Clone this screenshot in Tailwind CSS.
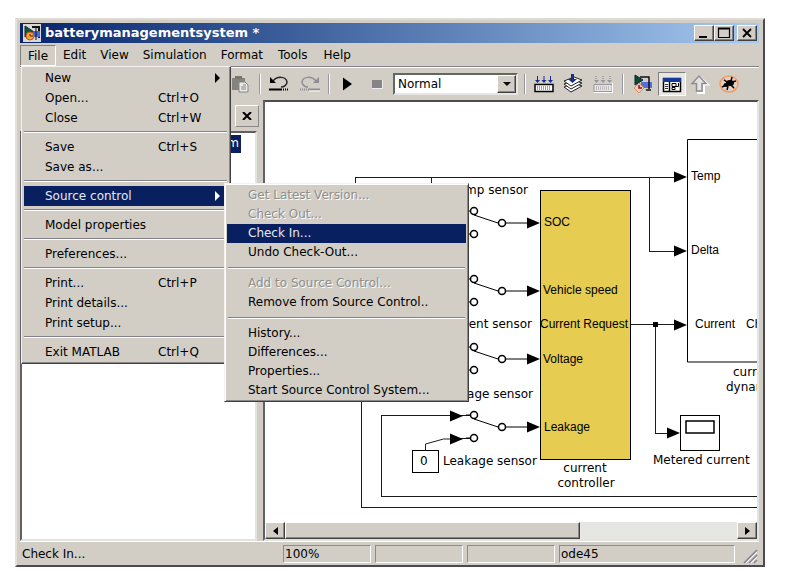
<!DOCTYPE html>
<html lang="en">
<head>
    <meta charset="UTF-8">
    <meta name="viewport" content="width=device-width, initial-scale=1.0">
    <title>batterymanagementsystem *</title>
    <script src="https://cdn.jsdelivr.net/npm/@tailwindcss/browser@4"></script>
</head>
<body class="h-screen bg-white pl-[15px] pr-[26px] py-[18px] font-['DejaVu_Sans',sans-serif] text-[12px] leading-[20px] text-black">

<!-- Window -->
<div class="h-full flex flex-col bg-[#d2cec6] border-2 border-t-[#dedbd5] border-l-[#e4e1dc] border-r-[#4a4a50] border-b-[#4a4a50] pt-[3px] pl-[3px] pr-1">

    <!-- Title bar -->
    <header class="flex items-center h-5 shrink-0 pl-0.5 pr-0.5 bg-linear-to-r from-[#08246b] to-[#a6caf0]">
        <svg class="w-5 h-5" viewBox="0 0 20 20">
            <rect x="1" y="1" width="18" height="18" fill="#d8d8d8"/>
            <path d="M3 3v11l9-5z" fill="#0c5a3c" stroke="#222"/>
            <path d="M10 4h7v11" fill="none" stroke="#111" stroke-width="2"/>
            <rect x="11" y="8" width="7" height="6" fill="#4468d8"/>
            <path d="M14 3v14" stroke="#111"/>
            <circle cx="8" cy="13" r="4" fill="#f0a040" stroke="#c05818"/>
            <path d="M8 11v2h3" fill="none" stroke="#702800"/>
        </svg>
        <h1 class="flex-1 pl-[3px] text-[13px] font-bold text-white">batterymanagementsystem *</h1>
        <button aria-label="Minimize" class="w-5 h-4 bg-[#d2cec6] border border-t-white border-l-white border-r-[#404040] border-b-[#404040] shadow-[inset_-1px_-1px_#808080]">
            <svg class="w-[18px] h-3.5" viewBox="0 0 18 14"><path d="M4 10h8v2H4z"/></svg>
        </button>
        <button aria-label="Maximize" class="w-5 h-4 bg-[#d2cec6] border border-t-white border-l-white border-r-[#404040] border-b-[#404040] shadow-[inset_-1px_-1px_#808080]">
            <svg class="w-[18px] h-3.5" viewBox="0 0 18 14"><path d="M3.500 2h11M3.500 3h11M3.500 1.500v10h11v-10" fill="none" stroke="#000" stroke-width="1.200"/></svg>
        </button>
        <button aria-label="Close" class="ml-[3px] w-5 h-4 bg-[#d2cec6] border border-t-white border-l-white border-r-[#404040] border-b-[#404040] shadow-[inset_-1px_-1px_#808080]">
            <svg class="w-[18px] h-3.5" viewBox="0 0 18 14"><path d="M5 3l8 8M13 3l-8 8" stroke="#000" stroke-width="1.800"/></svg>
        </button>
    </header>

    <!-- Menu bar -->
    <nav class="flex h-6 shrink-0 pt-0.5 border-b border-[#85818a]">
        <div class="relative">
            <button class="h-[21px] w-9 border border-t-[#808080] border-l-[#808080] border-r-white border-b-white">File</button>

            <!-- File menu -->
            <div class="absolute z-10 left-px top-[21px] w-[210px] pt-px pb-px px-0.5 bg-[#d2cec6] border border-t-[#f4f2ef] border-l-[#f4f2ef] border-r-[#404040] border-b-[#404040] shadow-[inset_-1px_-1px_#8c8888]">
                <button class="flex w-full h-5 items-center pl-[21px] pr-1.5"><span class="flex-1 text-left">New</span><svg class="w-2 h-2.5" viewBox="0 0 8 10"><path d="M1 0l5 5-5 5z"/></svg></button>
                <button class="flex w-full h-5 items-center pl-[21px]"><span class="w-[113px] text-left">Open...</span><span>Ctrl+O</span></button>
                <button class="flex w-full h-5 items-center pl-[21px]"><span class="w-[113px] text-left">Close</span><span>Ctrl+W</span></button>
                <hr class="h-0.5 mt-[3px] mb-1 mr-px border-t border-b border-t-[#85818a] border-b-white">
                <button class="flex w-full h-5 items-center pl-[21px]"><span class="w-[113px] text-left">Save</span><span>Ctrl+S</span></button>
                <button class="flex w-full h-5 items-center pl-[21px]">Save as...</button>
                <hr class="h-0.5 mt-[3px] mb-1 mr-px border-t border-b border-t-[#85818a] border-b-white">
                <div class="relative">
                    <button class="flex w-full h-5 items-center pl-[21px] pr-1.5 bg-[#08205f] text-[#e8e8f0]"><span class="flex-1 text-left">Source control</span><svg class="w-2 h-2.5 fill-white" viewBox="0 0 8 10"><path d="M1 0l5 5-5 5z"/></svg></button>

                    <!-- Source control submenu -->
                    <div class="absolute z-20 left-[200px] -top-[3px] w-[245px] pt-0.5 pb-px px-0.5 bg-[#d2cec6] border border-t-[#f4f2ef] border-l-[#f4f2ef] border-r-[#404040] border-b-[#404040] shadow-[inset_1px_1px_#fff,inset_-1px_-1px_#8c8888]">
                        <button disabled class="block w-full h-[19px] leading-[19px] pl-[21px] text-left text-[#918d8b] text-shadow-[1px_1px_#fff]">Get Latest Version...</button>
                        <button disabled class="block w-full h-[19px] leading-[19px] pl-[21px] text-left text-[#918d8b] text-shadow-[1px_1px_#fff]">Check Out...</button>
                        <button class="block w-full h-[19px] leading-[19px] pl-[21px] text-left bg-[#08205f] text-[#e8e8f0]">Check In...</button>
                        <button class="block w-full h-[19px] leading-[19px] pl-[21px] text-left">Undo Check-Out...</button>
                        <hr class="h-0.5 my-[5px] mx-px border-t border-b border-t-[#85818a] border-b-white">
                        <button disabled class="block w-full h-[19px] leading-[19px] pl-[21px] text-left text-[#918d8b] text-shadow-[1px_1px_#fff]">Add to Source Control...</button>
                        <button class="block w-full h-[19px] leading-[19px] pl-[21px] text-left">Remove from Source Control..</button>
                        <hr class="h-0.5 my-[5px] mx-px border-t border-b border-t-[#85818a] border-b-white">
                        <button class="block w-full h-[19px] leading-[19px] pl-[21px] text-left">History...</button>
                        <button class="block w-full h-[19px] leading-[19px] pl-[21px] text-left">Differences...</button>
                        <button class="block w-full h-[19px] leading-[19px] pl-[21px] text-left">Properties...</button>
                        <button class="block w-full h-[19px] leading-[19px] pl-[21px] text-left">Start Source Control System...</button>
                    </div>
                </div>
                <hr class="h-0.5 mt-[3px] mb-1 mr-px border-t border-b border-t-[#85818a] border-b-white">
                <button class="flex w-full h-5 items-center pl-[21px]">Model properties</button>
                <hr class="h-0.5 mt-[3px] mb-1 mr-px border-t border-b border-t-[#85818a] border-b-white">
                <button class="flex w-full h-5 items-center pl-[21px]">Preferences...</button>
                <hr class="h-0.5 mt-[3px] mb-1 mr-px border-t border-b border-t-[#85818a] border-b-white">
                <button class="flex w-full h-5 items-center pl-[21px]"><span class="w-[113px] text-left">Print...</span><span>Ctrl+P</span></button>
                <button class="flex w-full h-5 items-center pl-[21px]">Print details...</button>
                <button class="flex w-full h-5 items-center pl-[21px]">Print setup...</button>
                <hr class="h-0.5 mt-[3px] mb-1 mr-px border-t border-b border-t-[#85818a] border-b-white">
                <button class="flex w-full h-5 items-center pl-[21px]"><span class="w-[113px] text-left">Exit MATLAB</span><span>Ctrl+Q</span></button>
            </div>
        </div>
        <button class="h-5 px-[7px]">Edit</button>
        <button class="h-5 px-[7px]">View</button>
        <button class="h-5 px-[7px]">Simulation</button>
        <button class="h-5 px-[7px]">Format</button>
        <button class="h-5 px-2">Tools</button>
        <button class="h-5 px-2">Help</button>
    </nav>

    <!-- Toolbar -->
    <div class="flex items-center h-[33px] shrink-0 border-t border-white pl-[208px]">
        <button aria-label="Paste" class="w-6 h-6 flex items-center justify-center">
            <svg class="w-5 h-5" viewBox="0 0 20 20">
                <path d="M2 4h13v12H2z" fill="#85857f"/><path d="M5 2h7v3H5z" fill="#77776f"/>
                <path d="M9 8h6l3 3v7H9z" fill="#eceae6" stroke="#85858c"/><path d="M11 15h5M11 13h5M13 11h3" stroke="#85858c"/>
            </svg>
        </button>
        <span class="ml-[7px] w-0.5 h-5 bg-[#9694a0] border-r border-white"></span>
        <button aria-label="Undo" class="ml-[6px] w-6 h-6 flex items-center justify-center">
            <svg class="w-5 h-5" viewBox="0 0 20 20">
                <path d="M1 3v6h6z"/><path d="M4 7C8 2 17 2 18 8c0 3-3 5-6 5" fill="none" stroke="#222" stroke-width="1.500"/>
                <path d="M0 15.500h12" stroke="#000" stroke-width="2"/><path d="M12 15.500h8" stroke="#000" stroke-width="2" stroke-dasharray="1 1"/>
            </svg>
        </button>
        <button aria-label="Redo" class="ml-[7px] w-6 h-6 flex items-center justify-center">
            <svg class="w-5 h-5" viewBox="0 0 20 20">
                <path d="M19 3v6h-6z" fill="#8e8c94"/><path d="M16 7C12 2 3 2 2 8c0 3 3 5 6 5" fill="none" stroke="#8e8c94" stroke-width="1.500"/>
                <path d="M8 15.500h12" stroke="#8e8c94" stroke-width="2"/><path d="M0 15.500h8" stroke="#8e8c94" stroke-width="2" stroke-dasharray="1 1"/><path d="M9 17h11" stroke="#fff"/>
            </svg>
        </button>
        <span class="ml-[6px] w-0.5 h-5 bg-[#9694a0] border-r border-white"></span>
        <button aria-label="Start simulation" class="ml-[5px] w-6 h-6 flex items-center justify-center">
            <svg class="w-5 h-5" viewBox="0 0 20 20"><path d="M6 3.500l9 6.500-9 6.500z"/></svg>
        </button>
        <button aria-label="Stop simulation" class="ml-[6px] w-6 h-6 flex items-center justify-center">
            <svg class="w-5 h-5" viewBox="0 0 20 20"><path d="M5 6h10v8H5z" fill="#858585"/><path d="M5 14.500h10.500V6" fill="none" stroke="#eee"/></svg>
        </button>
        <div class="ml-[4px] relative w-[125px] h-[22px]">
            <select aria-label="Simulation mode" class="appearance-none w-full h-full pl-[3px] bg-white border-2 border-t-[#606860] border-l-[#606860] border-r-[#e8e6e2] border-b-[#e8e6e2] leading-[18px]">
                <option>Normal</option>
                <option>Accelerator</option>
                <option>External</option>
            </select>
            <span class="pointer-events-none absolute right-0.5 top-0.5 w-[19px] h-[18px] flex items-center justify-center bg-[#d2cec6] border border-t-white border-l-white border-r-[#404040] border-b-[#404040] shadow-[inset_-1px_-1px_#8c8888]">
                <svg class="w-2 h-1" viewBox="0 0 8 4"><path d="M0 0h8L4 4z"/></svg>
            </span>
        </div>
        <span class="ml-[6px] w-0.5 h-5 bg-[#9694a0] border-r border-white"></span>
        <button aria-label="Incremental build" class="ml-[6px] w-6 h-6 flex items-center justify-center">
            <svg class="w-5 h-5" viewBox="0 0 20 20">
                <path d="M1 10.500h18v7H1z" fill="#fff" stroke="#000" stroke-width="1.500"/>
                <path d="M3 13h14M3 15h14" stroke="#444" stroke-dasharray="1 1"/>
                <path d="M3.500 2v5M10 2v5M16.500 2v5" stroke="#182c90"/>
                <path d="M1 6h5L3.500 9zM7.500 6h5L10 9zM14 6h5l-2.500 3z" fill="#182c90"/>
            </svg>
        </button>
        <button aria-label="Build all" class="ml-[5px] w-6 h-6 flex items-center justify-center">
            <svg class="w-5 h-5" viewBox="0 0 20 20">
                <path d="M1 13l10-4 8 3-11 6z" fill="#fff" stroke="#222"/>
                <path d="M1 10l10-4 8 3-11 6z" fill="#fff" stroke="#222"/>
                <path d="M1 7l10-4 8 3-11 6z" fill="#fff" stroke="#222"/>
                <path d="M8 0h3v5h3l-4.500 4L5 5h3z" fill="#182c90"/>
            </svg>
        </button>
        <button aria-label="Rebuild" class="ml-[6px] w-6 h-6 flex items-center justify-center">
            <svg class="w-5 h-5" viewBox="0 0 20 20">
                <path d="M1 10.500h18v7H1z" fill="#e6e4e0" stroke="#98969c"/>
                <path d="M3 13h14M3 15h14" stroke="#98969c" stroke-dasharray="1 1"/>
                <path d="M3 2v5M10 2v5M17 2v5" stroke="#a8a6aa" stroke-dasharray="1 1" stroke-width="2"/>
                <path d="M1 6h5L3.500 9zM7.500 6h5L10 9zM14 6h5l-2.500 3z" fill="#98969c"/>
                <path d="M1 18.500h18.500V9" fill="none" stroke="#fff"/>
            </svg>
        </button>
        <span class="ml-[7px] w-0.5 h-5 bg-[#9694a0] border-r border-white"></span>
        <button aria-label="Library browser" class="ml-[7px] w-6 h-6 flex items-center justify-center">
            <svg class="w-5 h-5" viewBox="0 0 20 20">
                <path d="M2 1v10l8-5z" fill="#0c4a34" stroke="#123"/>
                <rect x="8" y="8" width="11" height="6" fill="#5470dc"/>
                <path d="M7 3h9v12M13 16h5" fill="none" stroke="#111" stroke-width="1.500"/>
                <path d="M6 9l5 5-5 5-5-5z" fill="#f8c8b0" stroke="#e09060"/><path d="M6 11v3h3" fill="none" stroke="#702030" stroke-width="1.500"/>
            </svg>
        </button>
        <button aria-label="Model explorer" class="ml-[3px] w-7 h-6 flex items-center justify-center bg-[#e9e7e3] border border-t-[#808080] border-l-[#808080] border-r-white border-b-white">
            <svg class="w-5 h-5" viewBox="0 0 20 20">
                <path d="M1.500 4.500h17v13h-17z" fill="#fff" stroke="#000" stroke-width="1.500"/>
                <path d="M1 4h18v4H1z" fill="#14389c"/><path d="M7.500 8v9" stroke="#000" stroke-width="1.500"/>
                <path d="M3 10.500h3M3 12.500h3M3 14.500h3" stroke="#333"/>
                <path d="M10 9.500h4v3h-4zM10 15.500h3v-2h-3zM14 12.500h2.500V9" fill="none" stroke="#000"/>
            </svg>
        </button>
        <button aria-label="Go to parent system" class="ml-0.5 w-6 h-6 flex items-center justify-center">
            <svg class="w-5 h-5" viewBox="0 0 20 20">
                <path d="M10 3l8 7.500h-4V19H7" fill="none" stroke="#fff" stroke-width="2"/>
                <path d="M9 2l7 7.500h-4V17H6.500V9.500H2z" fill="#e4e2de" stroke="#8e8c94" stroke-width="1.500"/>
            </svg>
        </button>
        <button aria-label="Debug" class="ml-[5px] w-6 h-6 flex items-center justify-center">
            <svg class="w-5 h-5" viewBox="0 0 20 20">
                <ellipse cx="10" cy="10" rx="9" ry="8" fill="#e0d2ca" stroke="#ec9c68" stroke-width="1.500"/>
                <path d="M4 4l13 12" stroke="#ec9c68" stroke-width="1.500"/>
                <ellipse cx="11" cy="9" rx="4" ry="3"/><ellipse cx="7" cy="11" rx="2.500" ry="2"/>
                <path d="M8 8L5 6M7 11l-4 2M9 12l-1 4M12 11l3 3M13 8l4-1M12 7l1-4" stroke="#000" stroke-width="1.500"/>
            </svg>
        </button>
    </div>

    <!-- Browser panel and model canvas -->
    <main class="flex flex-1 min-h-0">
        <aside class="flex flex-col w-[237px] shrink-0">
            <div class="flex justify-end items-center h-[31px] shrink-0 -mr-0.5">
                <button aria-label="Close browser" class="w-6 h-[22px] flex items-center justify-center border border-t-white border-l-white border-r-[#8c8888] border-b-[#8c8888]">
                    <svg class="w-2.5 h-2" viewBox="0 0 10 8"><path d="M1 0l8 8M9 0L1 8" stroke="#000" stroke-width="2"/></svg>
                </button>
            </div>
            <div class="flex-1 bg-white border-2 border-t-[#606060] border-l-[#606068] border-r-[#e2e4e0] border-b-[#e2e4e0] pt-0.5 pr-3.5">
                <p class="ml-auto w-fit px-0.5 h-[18px] leading-[16px] bg-[#08205f] text-white">batterymanagementsystem</p>
            </div>
        </aside>

        <section class="ml-[6px] flex flex-col flex-1 min-w-0 border-2 border-t-[#4c504c] border-l-[#606068] border-r-[#dfe6e4] border-b-[#e2e4e0]">
            <svg class="block flex-1 min-h-0 w-full bg-white text-[12px]" role="img" aria-label="Battery model">
                <defs>
                    <path id="arrow" d="M-13-5.500L0 0l-13 5.500z"/>
                    <g id="switch">
                        <path d="M-8 0h4M-8 23h4M0 4l24 8M32 12h30" fill="none" stroke="#000"/>
                        <circle r="3.500" fill="#fff" stroke="#000" stroke-width="1.500"/>
                        <circle cy="23" r="3.500" fill="#fff" stroke="#000" stroke-width="1.500"/>
                        <circle cx="28" cy="12" r="3.500" fill="#fff" stroke="#000" stroke-width="1.500"/>
                        <use href="#arrow" x="66" y="12"/>
                    </g>
                </defs>
                <g transform="translate(-265 -102)">
                    <!-- signal lines -->
                    <g fill="none" stroke="#1c1c1c" shape-rendering="crispEdges">
                        <path d="M355.500 200v-22.500h320M431.500 178v30M649.500 178v73h28"/>
                        <path d="M361.500 380v127.500h400M470 415.500h-89v80.500h381M460 438.500h10"/>
                        <path d="M630 324.500h46M655.500 324v109h14"/>
                    </g>
                    <path d="M425.500 450v-6l18-5h18" fill="none" stroke="#1c1c1c"/>
                    <rect x="653" y="322" width="5" height="5"/>

                    <!-- current dynamics block -->
                    <path d="M800 139.500H687.500V362H800" fill="#fff" stroke="#000"/>
                    <use href="#arrow" x="687" y="177"/>
                    <use href="#arrow" x="687" y="251"/>
                    <use href="#arrow" x="687" y="325"/>

                    <!-- switches -->
                    <use href="#switch" x="474" y="211"/>
                    <use href="#switch" x="474" y="279"/>
                    <use href="#switch" x="474" y="347"/>
                    <use href="#switch" x="474" y="415"/>
                    <use href="#arrow" x="463" y="416"/>
                    <use href="#arrow" x="463" y="439"/>

                    <!-- current controller block -->
                    <rect x="540.500" y="190.500" width="90" height="269" fill="#e6cc50" stroke="#000"/>
                    <rect x="412.500" y="450.500" width="26" height="22" fill="#fff" stroke="#000"/>
                    <text x="420" y="465">0</text>

                    <!-- scope -->
                    <rect x="680.500" y="415.500" width="39" height="35" fill="#fff" stroke="#000"/>
                    <rect x="686" y="421" width="28" height="12" fill="#fff" stroke="#000" stroke-width="1.500"/>
                    <use href="#arrow" x="680" y="433"/>

                    <g class="font-['Liberation_Sans',sans-serif]">
                        <text x="544" y="226">SOC</text>
                        <text x="543" y="294">Vehicle speed</text>
                        <text x="540" y="328">Current Request</text>
                        <text x="543" y="363">Voltage</text>
                        <text x="544" y="431">Leakage</text>
                        <text x="691" y="180">Temp</text>
                        <text x="691" y="254">Delta</text>
                        <text x="695" y="328">Current</text>
                        <text x="746" y="328">Charge</text>
                    </g>
                    <text x="528" y="194" text-anchor="end">Temp sensor</text>
                    <text x="532" y="328" text-anchor="end">Current sensor</text>
                    <text x="533" y="398" text-anchor="end">Voltage sensor</text>
                    <text x="443" y="465">Leakage sensor</text>
                    <text x="585" y="472" text-anchor="middle">current</text>
                    <text x="586" y="487" text-anchor="middle">controller</text>
                    <text x="653" y="464">Metered current</text>
                    <text x="733" y="376">current</text>
                    <text x="726" y="391">dynamics</text>
                </g>
            </svg>

            <!-- Horizontal scroll bar -->
            <div class="flex h-[17px] shrink-0 bg-[#e6e6e2]">
                <button aria-label="Scroll left" class="w-5 flex items-center justify-center bg-[#d2cec6] border border-t-white border-l-white border-r-[#404040] border-b-[#404040] shadow-[inset_-1px_-1px_#8c8888]">
                    <svg class="w-[5px] h-2" viewBox="0 0 5 8"><path d="M5 0v8L0 4z"/></svg>
                </button>
                <div class="w-3/5 bg-[#d2cec6] border border-t-white border-l-white border-r-[#404040] border-b-[#404040] shadow-[inset_-1px_-1px_#8c8888]"></div>
                <button aria-label="Scroll right" class="ml-auto w-5 flex items-center justify-center bg-[#d2cec6] border border-t-white border-l-white border-r-[#404040] border-b-[#404040] shadow-[inset_-1px_-1px_#8c8888]">
                    <svg class="w-[5px] h-2" viewBox="0 0 5 8"><path d="M0 0v8l5-4z"/></svg>
                </button>
            </div>
        </section>
    </main>

    <!-- Status bar -->
    <footer class="flex items-center gap-1 h-6 shrink-0 border-t border-white pl-0.5">
        <span class="w-[257px]">Check In...</span>
        <span class="w-[88px] h-[18px] leading-4 pl-px border border-t-[#8c8a94] border-l-[#8c8a94] border-r-white border-b-white">100%</span>
        <span class="w-[88px] h-[18px] border border-t-[#8c8a94] border-l-[#8c8a94] border-r-white border-b-white"></span>
        <span class="w-[88px] h-[18px] border border-t-[#8c8a94] border-l-[#8c8a94] border-r-white border-b-white"></span>
        <span class="flex-1 h-[18px] leading-4 pl-px border border-t-[#8c8a94] border-l-[#8c8a94] border-r-white border-b-white">ode45</span>
        <svg class="w-5 h-[18px] self-end" viewBox="0 0 20 18">
            <path d="M5 16L18 3M10 16l8-8M15 16l3-3" stroke="#85838c" stroke-width="1.500"/>
            <path d="M7 16L18 5M12 16l6-6" stroke="#fff"/>
        </svg>
    </footer>
</div>

</body>
</html>
